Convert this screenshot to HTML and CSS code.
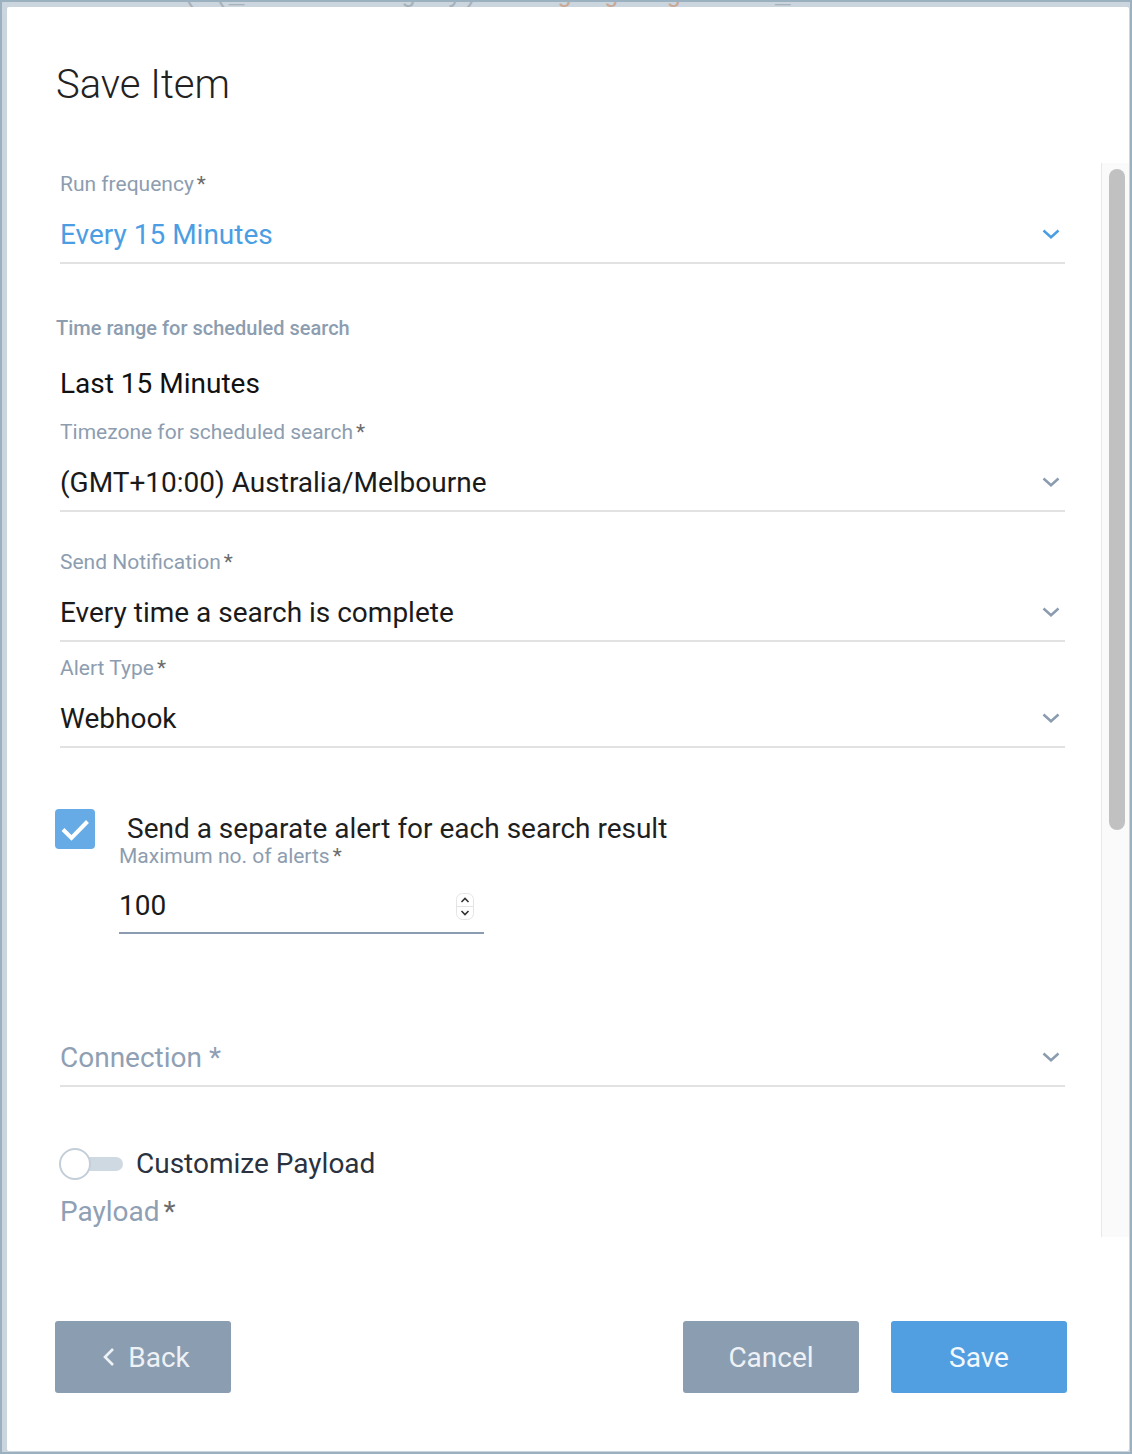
FILE: index.html
```html
<!DOCTYPE html>
<html>
<head>
<meta charset="utf-8">
<title>Save Item</title>
<link rel="stylesheet" href="styles.css">
</head>
<body>
<div class="page">
  <div class="backdrop-text">( (_sourcecategory) <span class="orange">/staging/logs</span> and _collector=<span class="orange">Harold Hosted collector</span></div>
  <div class="dialog">
    <h1 class="title">Save Item</h1>
    <div class="body">
      <div class="form">
        <div class="field">
          <div class="label">Run frequency<span class="req">*</span></div>
          <div class="select">
            <span class="value blue">Every 15 Minutes</span>
            <svg class="chev blue" width="18" height="10" viewBox="0 0 18 10"><polyline points="1.5,1.5 9,8.3 16.5,1.5" fill="none" stroke="currentColor" stroke-width="2.5"/></svg>
          </div>
        </div>

        <div class="label strong">Time range for scheduled search</div>
        <div class="plain-value">Last 15 Minutes</div>

        <div class="field tz">
          <div class="label">Timezone for scheduled search<span class="req">*</span></div>
          <div class="select">
            <span class="value">(GMT+10:00) Australia/Melbourne</span>
            <svg class="chev" width="18" height="10" viewBox="0 0 18 10"><polyline points="1.5,1.5 9,8.3 16.5,1.5" fill="none" stroke="currentColor" stroke-width="2.5"/></svg>
          </div>
        </div>

        <div class="field notif">
          <div class="label">Send Notification<span class="req">*</span></div>
          <div class="select">
            <span class="value">Every time a search is complete</span>
            <svg class="chev" width="18" height="10" viewBox="0 0 18 10"><polyline points="1.5,1.5 9,8.3 16.5,1.5" fill="none" stroke="currentColor" stroke-width="2.5"/></svg>
          </div>
        </div>

        <div class="field alert">
          <div class="label">Alert Type<span class="req">*</span></div>
          <div class="select">
            <span class="value">Webhook</span>
            <svg class="chev" width="18" height="10" viewBox="0 0 18 10"><polyline points="1.5,1.5 9,8.3 16.5,1.5" fill="none" stroke="currentColor" stroke-width="2.5"/></svg>
          </div>
        </div>

        <div class="check-row">
          <div class="checkbox">
            <svg width="40" height="40" viewBox="0 0 40 40"><polyline points="8,20.5 16.5,29 32.5,12.5" fill="none" stroke="#fff" stroke-width="4"/></svg>
          </div>
          <div class="check-col">
            <div class="check-text">Send a separate alert for each search result</div>
            <div class="label sub">Maximum no. of alerts<span class="req">*</span></div>
            <div class="number">
              <span class="value">100</span>
              <span class="spinner">
                <svg width="18" height="27" viewBox="0 0 18 27">
                  <rect x="0.5" y="0.5" width="17" height="26" rx="6" fill="#fff" stroke="#e4e4e4"/>
                  <line x1="1" y1="13.5" x2="17" y2="13.5" stroke="#e4e4e4"/>
                  <polyline points="5.5,9 9,5.5 12.5,9" fill="none" stroke="#333" stroke-width="1.6"/>
                  <polyline points="5.5,18 9,21.5 12.5,18" fill="none" stroke="#333" stroke-width="1.6"/>
                </svg>
              </span>
            </div>
          </div>
        </div>

        <div class="field conn">
          <div class="select">
            <span class="value placeholder">Connection *</span>
            <svg class="chev" width="18" height="10" viewBox="0 0 18 10"><polyline points="1.5,1.5 9,8.3 16.5,1.5" fill="none" stroke="currentColor" stroke-width="2.5"/></svg>
          </div>
        </div>

        <div class="toggle-row">
          <span class="toggle"><span class="track"></span><span class="knob"></span></span>
          <span class="toggle-text">Customize Payload</span>
        </div>

        <div class="payload">Payload<span class="req">*</span></div>
      </div>
      <div class="scrolltrack"><div class="thumb"></div></div>
    </div>
    <div class="footer">
      <button class="btn grey back">
        <svg width="13" height="20" viewBox="0 0 13 20"><polyline points="11,2 3,10 11,18" fill="none" stroke="currentColor" stroke-width="2.6"/></svg>
        <span>Back</span>
      </button>
      <div class="right-btns">
        <button class="btn grey">Cancel</button>
        <button class="btn blue-btn">Save</button>
      </div>
    </div>
  </div>
</div>
</body>
</html>
```

FILE: styles.css
```css
* { box-sizing: border-box; }
html, body { margin: 0; padding: 0; }
body { font-family: Roboto, "Noto Sans", sans-serif; }

.page {
  position: relative;
  width: 1132px;
  height: 1454px;
  border: 2px solid #9cb1c0;
  background: #cbd5dd;
  overflow: hidden;
}

.backdrop-text {
  font-family: "Liberation Mono", monospace;
  font-size: 26px;
  line-height: 30px;
  color: #a7b1ba;
  white-space: pre;
  margin-top: -22px;
  padding-left: 180px;
}
.backdrop-text .orange { color: #c9a996; }

.dialog {
  position: absolute;
  left: 5px;
  top: 5px;
  right: 1px;
  bottom: 1px;
  background: #fff;
  border-radius: 2px;
  display: flex;
  flex-direction: column;
}

.title {
  margin: 0;
  padding: 54px 0 0 49px;
  font-size: 40px;
  line-height: 48px;
  font-weight: 300;
  color: #222;
}

.body {
  margin-top: 54px;
  height: 1074px;
  display: flex;
  overflow: hidden;
}

.form {
  flex: 1;
  padding: 9px 36px 0 53px;
}

.label {
  font-size: 21px;
  line-height: 24px;
  color: #8d9db0;
}
.label.strong {
  font-weight: 500;
  margin: 52px 0 0 -4px;
  font-size: 20px;
}
.req {
  color: #6b6b6b;
  margin-left: 3px;
}

.select {
  display: flex;
  align-items: center;
  justify-content: space-between;
  padding: 20px 5px 8px 0;
  border-bottom: 2px solid #e2e2e2;
}
.value {
  font-size: 28px;
  line-height: 38px;
  color: #1a1a1a;
}
.blue { color: #4b9ee3; }
.chev { color: #8b9bb0; display: block; margin-top: -3px; }
.chev.blue { color: #4b9ee3; }

.plain-value {
  margin-top: 25px;
  font-size: 28px;
  line-height: 38px;
  color: #111;
}

.field.tz { margin-top: 17px; }
.field.notif { margin-top: 38px; }
.field.alert { margin-top: 14px; }

.check-row {
  margin-top: 61px;
  margin-left: -5px;
  display: flex;
  gap: 25px;
}
.checkbox {
  width: 40px;
  height: 40px;
  border-radius: 4px;
  background: #66abe6;
  flex: none;
}
.checkbox svg { display: block; }
.check-col { width: 364px; }
.check-text {
  font-size: 28px;
  line-height: 40px;
  color: #1f1f1f;
  margin-left: 7px;
  white-space: nowrap;
}
.label.sub { margin-top: -5px; margin-left: -1px; }
.number {
  display: flex;
  align-items: center;
  justify-content: space-between;
  padding: 19px 10px 7px 0;
  border-bottom: 2px solid #8b9bb0;
  margin-left: -1px;
}
.spinner svg { display: block; }

.field.conn { margin-top: 85px; }
.placeholder { color: #8fa0b4; }

.toggle-row {
  margin-top: 61px;
  display: flex;
  align-items: center;
  height: 32px;
}
.toggle {
  position: relative;
  width: 64px;
  height: 32px;
  flex: none;
  margin-left: -1px;
}
.track {
  position: absolute;
  left: 1px;
  top: 9px;
  width: 63px;
  height: 14px;
  border-radius: 7px;
  background: #cfd9e1;
}
.knob {
  position: absolute;
  left: 0;
  top: 0;
  width: 32px;
  height: 32px;
  border-radius: 50%;
  background: #fff;
  border: 2px solid #c4ced8;
}
.toggle-text {
  margin-left: 13px;
  font-size: 28px;
  line-height: 38px;
  color: #2a3240;
}

.payload {
  margin-top: 13px;
  font-size: 28px;
  line-height: 38px;
  color: #8fa0b4;
}
.payload .req { margin-left: 4px; }

.scrolltrack {
  width: 28px;
  flex: none;
  background: #fafafa;
  border-left: 1px solid #e8e8e8;
  padding: 6px 3px 0 7px;
}
.thumb {
  width: 16px;
  height: 661px;
  border-radius: 8px;
  background: #c1c1c1;
}

.footer {
  padding: 84px 62px 0 48px;
  display: flex;
  justify-content: space-between;
}
.right-btns {
  display: flex;
  gap: 32px;
}
.btn {
  width: 176px;
  height: 72px;
  border: none;
  border-radius: 3px;
  font-family: Roboto, "Noto Sans", sans-serif;
  font-size: 28px;
  color: #eef2f7;
  display: flex;
  align-items: center;
  justify-content: center;
  padding: 0;
}
.btn.grey { background: #8b9db0; }
.btn.blue-btn { background: #519fe1; color: #f2f8fd; }
.btn.back { gap: 13px; padding-left: 6px; }
.btn.back svg { display: block; }
```
